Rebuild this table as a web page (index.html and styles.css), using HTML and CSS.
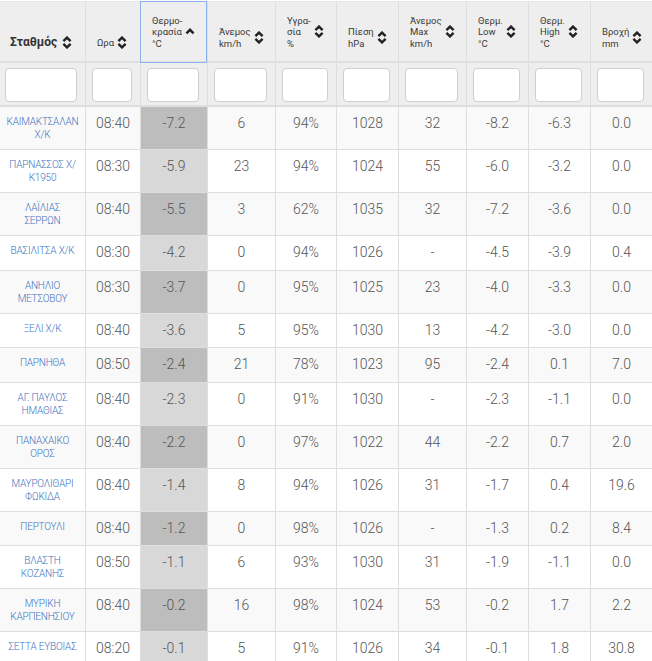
FILE: index.html
```html
<!DOCTYPE html>
<html lang="el">
<head>
<meta charset="utf-8">
<title>Σταθμοί</title>
<link rel="stylesheet" href="styles.css">
</head>
<body>
<table class="grid">
  <colgroup>
    <col class="c1"><col class="c2"><col class="c3"><col class="c4"><col class="c5">
    <col class="c6"><col class="c7"><col class="c8"><col class="c9"><col class="c10">
  </colgroup>
  <thead>
    <tr class="head">
      <th class="first"><div class="hc"><span class="ht main">Σταθμός</span><svg class="si" viewBox="0 0 10 13"><polyline points="1.4,5.2 5,1.6 8.6,5.2"/><polyline points="1.4,7.8 5,11.4 8.6,7.8"/></svg></div></th>
      <th><div class="hc"><span class="ht">Ωρα</span><svg class="si" viewBox="0 0 10 13"><polyline points="1.4,5.2 5,1.6 8.6,5.2"/><polyline points="1.4,7.8 5,11.4 8.6,7.8"/></svg></div></th>
      <th class="sorted"><div class="hc"><span class="ht">Θερμο-<br>κρασία<br>°C</span><svg class="si up" viewBox="0 0 10 7"><polyline points="1.4,5.4 5,1.8 8.6,5.4"/></svg></div></th>
      <th><div class="hc"><span class="ht">Άνεμος<br>km/h</span><svg class="si" viewBox="0 0 10 13"><polyline points="1.4,5.2 5,1.6 8.6,5.2"/><polyline points="1.4,7.8 5,11.4 8.6,7.8"/></svg></div></th>
      <th><div class="hc"><span class="ht">Υγρα-<br>σία<br>%</span><svg class="si" viewBox="0 0 10 13"><polyline points="1.4,5.2 5,1.6 8.6,5.2"/><polyline points="1.4,7.8 5,11.4 8.6,7.8"/></svg></div></th>
      <th><div class="hc"><span class="ht">Πίεση<br>hPa</span><svg class="si" viewBox="0 0 10 13"><polyline points="1.4,5.2 5,1.6 8.6,5.2"/><polyline points="1.4,7.8 5,11.4 8.6,7.8"/></svg></div></th>
      <th><div class="hc"><span class="ht">Άνεμος<br>Max<br>km/h</span><svg class="si" viewBox="0 0 10 13"><polyline points="1.4,5.2 5,1.6 8.6,5.2"/><polyline points="1.4,7.8 5,11.4 8.6,7.8"/></svg></div></th>
      <th><div class="hc"><span class="ht">Θερμ.<br>Low<br>°C</span><svg class="si" viewBox="0 0 10 13"><polyline points="1.4,5.2 5,1.6 8.6,5.2"/><polyline points="1.4,7.8 5,11.4 8.6,7.8"/></svg></div></th>
      <th><div class="hc"><span class="ht">Θερμ.<br>High<br>°C</span><svg class="si" viewBox="0 0 10 13"><polyline points="1.4,5.2 5,1.6 8.6,5.2"/><polyline points="1.4,7.8 5,11.4 8.6,7.8"/></svg></div></th>
      <th><div class="hc"><span class="ht">Βροχή<br>mm</span><svg class="si" viewBox="0 0 10 13"><polyline points="1.4,5.2 5,1.6 8.6,5.2"/><polyline points="1.4,7.8 5,11.4 8.6,7.8"/></svg></div></th>
    </tr>
    <tr class="filters">
      <th class="first"><input class="fi" type="text"></th>
      <th><input class="fi" type="text"></th>
      <th><input class="fi" type="text"></th>
      <th><input class="fi" type="text"></th>
      <th><input class="fi" type="text"></th>
      <th><input class="fi" type="text"></th>
      <th><input class="fi" type="text"></th>
      <th><input class="fi" type="text"></th>
      <th><input class="fi" type="text"></th>
      <th><input class="fi" type="text"></th>
    </tr>
  </thead>
  <tbody>
    <tr><td class="st"><a>ΚΑΙΜΑΚΤΣΑΛΑΝ<br>Χ/Κ</a></td><td>08:40</td><td class="tm">-7.2</td><td>6</td><td>94%</td><td>1028</td><td>32</td><td>-8.2</td><td>-6.3</td><td>0.0</td></tr>
    <tr><td class="st"><a>ΠΑΡΝΑΣΣΟΣ Χ/<br>Κ1950</a></td><td>08:30</td><td class="tm">-5.9</td><td>23</td><td>94%</td><td>1024</td><td>55</td><td>-6.0</td><td>-3.2</td><td>0.0</td></tr>
    <tr><td class="st"><a>ΛΑΪΛΙΑΣ<br>ΣΕΡΡΩΝ</a></td><td>08:40</td><td class="tm">-5.5</td><td>3</td><td>62%</td><td>1035</td><td>32</td><td>-7.2</td><td>-3.6</td><td>0.0</td></tr>
    <tr><td class="st"><a>ΒΑΣΙΛΙΤΣΑ Χ/Κ</a></td><td>08:30</td><td class="tm">-4.2</td><td>0</td><td>94%</td><td>1026</td><td>-</td><td>-4.5</td><td>-3.9</td><td>0.4</td></tr>
    <tr><td class="st"><a>ΑΝΗΛΙΟ<br>ΜΕΤΣΟΒΟΥ</a></td><td>08:30</td><td class="tm">-3.7</td><td>0</td><td>95%</td><td>1025</td><td>23</td><td>-4.0</td><td>-3.3</td><td>0.0</td></tr>
    <tr><td class="st"><a>ΞΕΛΙ Χ/Κ</a></td><td>08:40</td><td class="tm">-3.6</td><td>5</td><td>95%</td><td>1030</td><td>13</td><td>-4.2</td><td>-3.0</td><td>0.0</td></tr>
    <tr><td class="st"><a>ΠΑΡΝΗΘΑ</a></td><td>08:50</td><td class="tm">-2.4</td><td>21</td><td>78%</td><td>1023</td><td>95</td><td>-2.4</td><td>0.1</td><td>7.0</td></tr>
    <tr><td class="st"><a>ΑΓ. ΠΑΥΛΟΣ<br>ΗΜΑΘΙΑΣ</a></td><td>08:40</td><td class="tm">-2.3</td><td>0</td><td>91%</td><td>1030</td><td>-</td><td>-2.3</td><td>-1.1</td><td>0.0</td></tr>
    <tr><td class="st"><a>ΠΑΝΑΧΑΙΚΟ<br>ΟΡΟΣ</a></td><td>08:40</td><td class="tm">-2.2</td><td>0</td><td>97%</td><td>1022</td><td>44</td><td>-2.2</td><td>0.7</td><td>2.0</td></tr>
    <tr><td class="st"><a>ΜΑΥΡΟΛΙΘΑΡΙ<br>ΦΩΚΙΔΑ</a></td><td>08:40</td><td class="tm">-1.4</td><td>8</td><td>94%</td><td>1026</td><td>31</td><td>-1.7</td><td>0.4</td><td>19.6</td></tr>
    <tr><td class="st"><a>ΠΕΡΤΟΥΛΙ</a></td><td>08:40</td><td class="tm">-1.2</td><td>0</td><td>98%</td><td>1026</td><td>-</td><td>-1.3</td><td>0.2</td><td>8.4</td></tr>
    <tr><td class="st"><a>ΒΛΑΣΤΗ<br>ΚΟΖΑΝΗΣ</a></td><td>08:50</td><td class="tm">-1.1</td><td>6</td><td>93%</td><td>1030</td><td>31</td><td>-1.9</td><td>-1.1</td><td>0.0</td></tr>
    <tr><td class="st"><a>ΜΥΡΙΚΗ<br>ΚΑΡΠΕΝΗΣΙΟΥ</a></td><td>08:40</td><td class="tm">-0.2</td><td>16</td><td>98%</td><td>1024</td><td>53</td><td>-0.2</td><td>1.7</td><td>2.2</td></tr>
    <tr><td class="st"><a>ΣΕΤΤΑ ΕΥΒΟΙΑΣ</a></td><td>08:20</td><td class="tm">-0.1</td><td>5</td><td>91%</td><td>1026</td><td>34</td><td>-0.1</td><td>1.8</td><td>30.8</td></tr>
  </tbody>
</table>
</body>
</html>
```
FILE: styles.css
```css
html, body {
  margin: 0;
  padding: 0;
  background: #fff;
  overflow: hidden;
}
body {
  padding-top: 1px;
  font-family: Roboto, "Noto Sans", "DejaVu Sans", sans-serif;
}
.grid {
  border-collapse: separate;
  border-spacing: 0;
  table-layout: fixed;
  width: 653px;
}
.c1 { width: 86px; }
.c2 { width: 55px; }
.c3 { width: 67px; }
.c4 { width: 68px; }
.c5 { width: 61px; }
.c6 { width: 62px; }
.c7 { width: 68px; }
.c8 { width: 62px; }
.c9 { width: 62px; }
.c10 { width: 62px; }

.grid th, .grid td {
  box-sizing: border-box;
  border-right: 1px solid #dedede;
  border-bottom: 1px solid #dedede;
}
.head th {
  background: #eeeeee;
  height: 62px;
  vertical-align: bottom;
  padding: 0 14px 12px 11px;
  text-align: left;
  font-weight: normal;
  border-bottom: 2px solid #dedede;
  border-top: 1px solid #e6e6e6;
}
.head th.first {
  padding-left: 10px;
  padding-right: 13px;
}
.head th.sorted {
  position: relative;
}
.head th.sorted::after {
  content: "";
  position: absolute;
  left: -1px;
  right: 0;
  top: -1px;
  bottom: -2px;
  border: 1px solid #8db2f0;
}
.hc {
  display: flex;
  align-items: center;
  justify-content: space-between;
  gap: 3px;
}
.ht {
  font-size: 9.5px;
  line-height: 11.5px;
  color: #3a3a3a;
}
.ht.main {
  font-size: 12px;
  font-weight: bold;
  color: #333;
}
.si {
  width: 10px;
  height: 13px;
  flex: none;
  fill: none;
  stroke: #222;
  stroke-width: 2.4;
}
.si.up {
  height: 7px;
}
.filters th {
  background: #eeeeee;
  height: 44px;
  padding: 5px 8px 3px 6px;
  vertical-align: top;
  border-bottom: 2px solid #dedede;
}
.filters th.first {
  padding-left: 5px;
  padding-right: 8px;
}
.fi {
  display: block;
  box-sizing: border-box;
  width: 100%;
  height: 34px;
  margin: 0;
  padding: 0 6px;
  border: 1px solid #cfcfcf;
  border-radius: 4px;
  background: #fff;
}
.grid td {
  padding: 8px 3px;
  vertical-align: top;
  text-align: center;
  font-size: 14px;
  line-height: 17.5px;
  color: #555;
  font-weight: 300;
}
.grid tbody tr:nth-child(odd) td {
  background: #f9f9f9;
}
.grid tbody tr:nth-child(odd) td.tm {
  background: #bdbdbd;
}
.grid tbody tr:nth-child(even) td.tm {
  background: #d8d8d8;
}
.grid td.st {
  font-size: 10px;
  line-height: 13px;
  letter-spacing: -0.2px;
  font-weight: 300;
  padding-left: 2px;
  padding-right: 2px;
}
.st a {
  color: #3f74c0;
  white-space: nowrap;
}
```
